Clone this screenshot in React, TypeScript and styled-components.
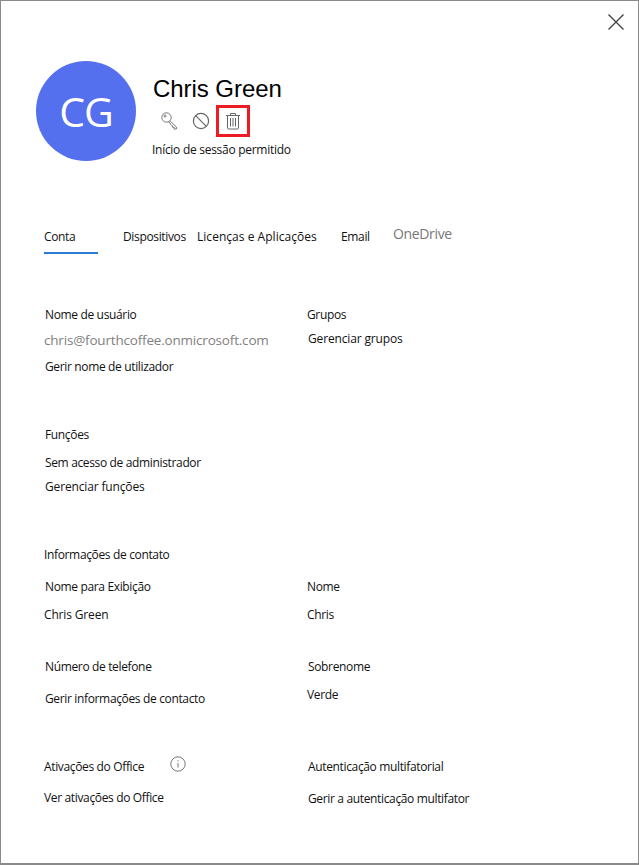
import React from "react";
import styled, { createGlobalStyle } from "styled-components";

const GlobalStyle = createGlobalStyle`
  html, body {
    margin: 0;
    padding: 0;
    background: #fff;
  }
`;

const Panel = styled.div`
  position: relative;
  box-sizing: border-box;
  width: 639px;
  height: 865px;
  padding: 60px 0 0 35px;
  background: #fff;
  border: 1px solid #8a8a8a;
  border-width: 1px 1px 2px 1px;
  font-family: "Open Sans", sans-serif;
  font-size: 12px;
  letter-spacing: -0.35px;
  color: #111;
`;

const CloseButton = styled.button`
  position: absolute;
  top: 12px;
  right: 13px;
  width: 18px;
  height: 18px;
  padding: 0;
  border: 0;
  background: none;
  display: flex;
`;

const Header = styled.header`
  display: flex;
  align-items: flex-start;
  gap: 17px;
`;

const Avatar = styled.div`
  width: 100px;
  height: 100px;
  border-radius: 50%;
  background: #5470ee;
  color: #fff;
  display: flex;
  align-items: center;
  justify-content: center;
  font-size: 41px;
  letter-spacing: -1px;
`;

const HeaderInfo = styled.div`
  display: flex;
  flex-direction: column;
  padding-top: 13px;
`;

const Name = styled.h1`
  margin: 0;
  font-family: "Liberation Sans", sans-serif;
  font-size: 24px;
  line-height: 30px;
  font-weight: 400;
  letter-spacing: -0.05px;
  color: #000;
`;

const Actions = styled.div`
  display: flex;
  align-items: center;
  height: 32px;
  margin: 1px 0 0 7px;
`;

const ActionIcon = styled.span<{ $selected?: boolean }>`
  box-sizing: border-box;
  width: 34px;
  height: 32px;
  display: flex;
  align-items: center;
  justify-content: center;
  border: 3px solid ${(p) => (p.$selected ? "#ed1c24" : "transparent")};
`;

const KeySlot = styled(ActionIcon)`
  width: 32px;
  margin-right: -1px;
  margin-left: -6px;
`;

const BanSlot = styled(ActionIcon)`
  width: 32px;
  margin-right: -1px;
`;

const Status = styled.div`
  margin: 5px 0 0 -1px;
  line-height: 16px;
  letter-spacing: -0.28px;
  color: #111;
`;

const Tabs = styled.nav`
  display: flex;
  align-items: flex-start;
  height: 36px;
  margin: 63px 0 0 8px;
`;

const Tab = styled.div<{ $width: number; $active?: boolean; $muted?: boolean; $spacing?: number }>`
  box-sizing: border-box;
  width: ${(p) => p.$width}px;
  height: 30px;
  padding-top: ${(p) => (p.$muted ? 2 : 5)}px;
  line-height: 16px;
  white-space: nowrap;
  border-bottom: ${(p) => (p.$active ? "2px solid #2b7cd3" : "2px solid transparent")};
  color: ${(p) => (p.$muted ? "#777" : "#111")};
  font-size: ${(p) => (p.$muted ? "14px" : "12px")};
  letter-spacing: ${(p) => p.$spacing ?? -0.35}px;
`;

const TabGap = styled.div<{ $width: number }>`
  width: ${(p) => p.$width}px;
`;

const Columns = styled.div`
  display: grid;
  grid-template-columns: 263px 263px;
  margin: 46px 0 0 8px;
`;

const Column = styled.div`
  display: flex;
  flex-direction: column;
`;

const Line = styled.div<{ $top?: number; $x?: number; $muted?: boolean; $spacing?: number }>`
  display: flex;
  align-items: center;
  height: 16px;
  margin-top: ${(p) => p.$top ?? 0}px;
  margin-left: ${(p) => p.$x ?? 0}px;
  white-space: nowrap;
  color: ${(p) => (p.$muted ? "#7f7f7f" : "#111")};
  font-size: ${(p) => (p.$muted ? "13.5px" : "12px")};
  letter-spacing: ${(p) => p.$spacing ?? (p.$muted ? -0.19 : -0.35)}px;
`;

const InfoIcon = styled.svg`
  margin: -4px 0 0 26px;
`;

const App: React.FC = () => (
  <>
    <GlobalStyle />
    <Panel>
      <CloseButton aria-label="Fechar">
        <svg width="18" height="18" viewBox="0 0 18 18" fill="none" stroke="#444" strokeWidth="1.4">
          <path d="M1.5 1.5 16.5 16.5M16.5 1.5 1.5 16.5" />
        </svg>
      </CloseButton>

      <Header>
        <Avatar>CG</Avatar>
        <HeaderInfo>
          <Name>Chris Green</Name>
          <Actions>
            <KeySlot>
              <svg width="20" height="20" viewBox="0 0 20 20" fill="none" stroke="#777" strokeWidth="1">
                <circle cx="6.5" cy="6.5" r="4.7" />
                <circle cx="5" cy="5" r="1" />
                <path d="M10 9.8 16.4 16v2h-2.2v-1.6h-1.6v-1.6l-1-.2-1-1-.2-1.2-2-1.4" />
              </svg>
            </KeySlot>
            <BanSlot>
              <svg width="18" height="18" viewBox="0 0 18 18" fill="none" stroke="#666" strokeWidth="1.2">
                <circle cx="9" cy="9" r="7.6" />
                <path d="M3.7 3.7 14.3 14.3" />
              </svg>
            </BanSlot>
            <ActionIcon $selected>
              <svg width="16" height="18" viewBox="0 0 16 18" fill="none" stroke="#666" strokeWidth="1">
                <path d="M1 3.5h14M5.5 3.5v-2h5v2M2.5 3.5v12.5c0 .6.4 1 1 1h9c.6 0 1-.4 1-1V3.5" />
                <path d="M5.5 6v8.5M8 6v8.5M10.5 6v8.5" />
              </svg>
            </ActionIcon>
          </Actions>
          <Status>Início de sessão permitido</Status>
        </HeaderInfo>
      </Header>

      <Tabs>
        <Tab $width={54} $active>
          Conta
        </Tab>
        <TabGap $width={25} />
        <Tab $width={74}>Dispositivos</Tab>
        <Tab $width={144} $spacing={0.03}>
          Licenças e Aplicações
        </Tab>
        <Tab $width={52}>Email</Tab>
        <Tab $width={70} $muted>
          OneDrive
        </Tab>
      </Tabs>

      <Columns>
        <Column>
          <Line $x={1}>Nome de usuário</Line>
          <Line $top={10} $muted>
            chris@fourthcoffee.onmicrosoft.com
          </Line>
          <Line $top={10} $x={1}>
            Gerir nome de utilizador
          </Line>
          <Line $top={52} $x={1}>
            Funções
          </Line>
          <Line $top={12} $x={1}>
            Sem acesso de administrador
          </Line>
          <Line $top={8} $x={1} $spacing={-0.15}>
            Gerenciar funções
          </Line>
          <Line $top={52}>Informações de contato</Line>
          <Line $top={16} $x={1}>
            Nome para Exibição
          </Line>
          <Line $top={12} $spacing={-0.15}>
            Chris Green
          </Line>
          <Line $top={36} $x={1}>
            Número de telefone
          </Line>
          <Line $top={16} $x={1}>
            Gerir informações de contacto
          </Line>
          <Line $top={52}>
            Ativações do Office
            <InfoIcon width="16" height="16" viewBox="0 0 16 16" fill="none" stroke="#777">
              <circle cx="8" cy="8" r="7.2" />
              <path d="M8 7v4.5M8 4.2v1.2" />
            </InfoIcon>
          </Line>
          <Line $top={15}>Ver ativações do Office</Line>
        </Column>

        <Column>
          <Line>Grupos</Line>
          <Line $top={8} $x={1} $spacing={-0.15}>
            Gerenciar grupos
          </Line>
          <Line $top={232}>Nome</Line>
          <Line $top={12}>Chris</Line>
          <Line $top={36} $x={1}>
            Sobrenome
          </Line>
          <Line $top={12}>Verde</Line>
          <Line $top={56} $x={1}>
            Autenticação multifatorial
          </Line>
          <Line $top={16} $x={1}>
            Gerir a autenticação multifator
          </Line>
        </Column>
      </Columns>
    </Panel>
  </>
);

export default App;
